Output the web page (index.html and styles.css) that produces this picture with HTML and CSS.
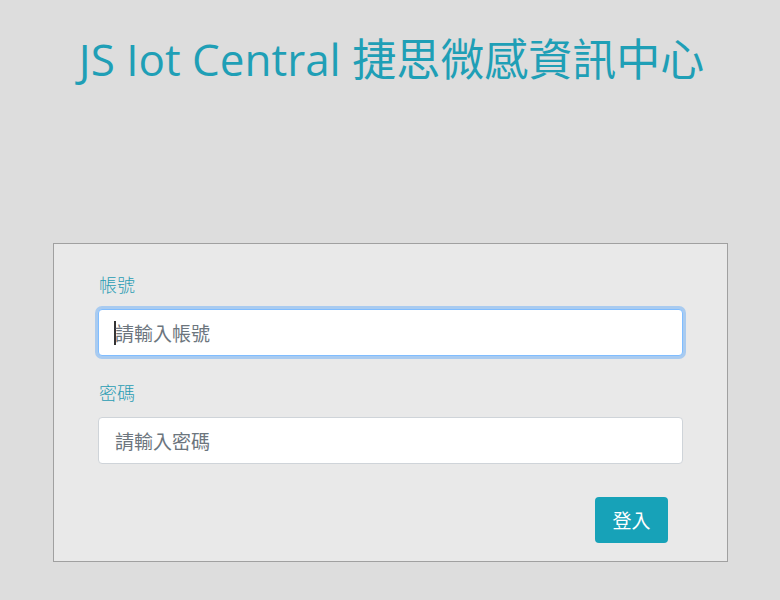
FILE: index.html
```html
<!DOCTYPE html>
<html lang="zh-Hant">
<head>
<meta charset="utf-8">
<title>JS Iot Central</title>
<link rel="stylesheet" href="styles.css">
</head>
<body>
<h1 class="title">JS Iot Central 捷思微感資訊中心</h1>
<form class="card">
  <div class="group">
    <label class="label" for="acc">帳號</label>
    <div class="input focused" id="acc"><span class="caret"></span><span class="ph">請輸入帳號</span></div>
  </div>
  <div class="group">
    <label class="label" for="pwd">密碼</label>
    <div class="input" id="pwd"><span class="ph">請輸入密碼</span></div>
  </div>
  <div class="actions">
    <button type="button" class="btn">登入</button>
  </div>
</form>
</body>
</html>
```
FILE: styles.css
```css
* { box-sizing: border-box; }
html, body { margin: 0; padding: 0; }
body {
  background: #dddddd;
  width: 780px;
  height: 600px;
  font-family: "Open Sans", "Noto Sans CJK TC", sans-serif;
}
.title {
  margin: 0;
  padding-top: 28px;
  padding-left: 3px;
  text-align: center;
  font-weight: 400;
  font-size: 44px;
  line-height: 62px;
  color: #1f9fb6;
  font-family: "Open Sans", "Noto Sans CJK TC", sans-serif;
}
.card {
  margin: 153px 0 0 53px;
  width: 675px;
  height: 319px;
  background: #e9e9e9;
  border: 1px solid #a0a0a0;
  padding: 29px 44px 0 44px;
}
.group { margin-bottom: 25px; }
.label {
  display: block;
  font-size: 18px;
  font-weight: 300;
  line-height: 24px;
  color: #2a9cb3;
  margin-bottom: 12px;
  padding-left: 1px;
}
.input {
  height: 47px;
  background: #fff;
  border: 1px solid #cfd4d9;
  border-radius: 4px;
  padding: 0 16px;
  display: flex;
  align-items: center;
  font-size: 19px;
  color: #6c757d;
}
.input.focused {
  border-color: #80bdff;
  box-shadow: 0 0 0 3px #a9cbf0;
}
.caret {
  display: inline-block;
  width: 2px;
  height: 24px;
  background: #333;
  margin-left: -1px;
  margin-right: -1px;
}
.actions {
  display: flex;
  justify-content: flex-end;
  padding-right: 15px;
  margin-top: 33px;
}
.btn {
  width: 73px;
  height: 46px;
  background: #17a2b8;
  border: none;
  border-radius: 4px;
  color: #fff;
  font-size: 19px;
  font-family: "Open Sans", "Noto Sans CJK TC", sans-serif;
  padding: 0;
}
```
